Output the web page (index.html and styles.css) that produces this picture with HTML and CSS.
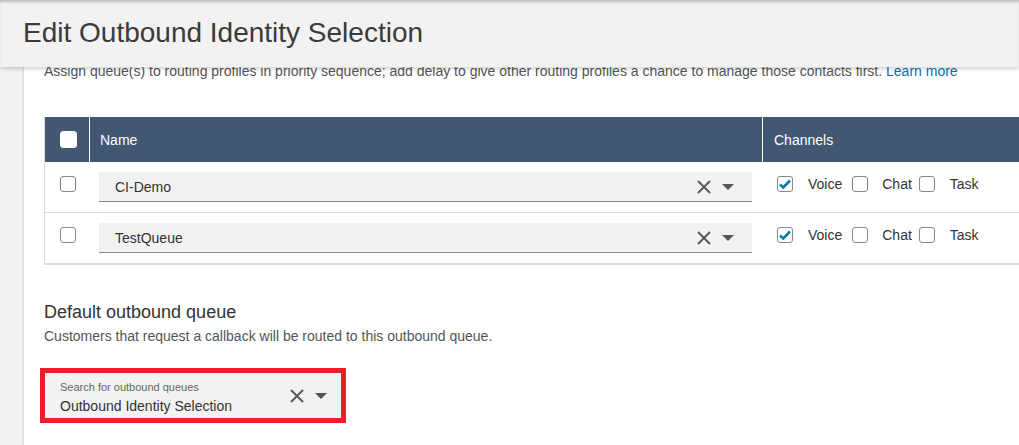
FILE: index.html
```html
<!DOCTYPE html>
<html>
<head>
<meta charset="utf-8">
<link rel="stylesheet" href="styles.css">
</head>
<body>
<header class="topbar"><h1 class="title">Edit Outbound Identity Selection</h1></header>
<main class="panel">
  <p class="desc">Assign queue(s) to routing profiles in priority sequence; add delay to give other routing profiles a chance to manage those contacts first. <a class="link">Learn more</a></p>
  <div class="table">
    <div class="row head">
      <div class="cell c-check"><span class="cb cb-white"></span></div>
      <div class="cell c-name">Name</div>
      <div class="cell c-chan">Channels</div>
    </div>
    <div class="row">
      <div class="cell c-check"><span class="cb"></span></div>
      <div class="cell c-name">
        <div class="select"><span class="sel-text">CI-Demo</span>
          <svg class="ico-x" width="14" height="14" viewBox="0 0 14 14"><path d="M1 1L13 13M13 1L1 13" stroke="#555" stroke-width="1.8"/></svg>
          <svg class="ico-caret" width="12" height="6" viewBox="0 0 12 6"><path d="M0 0H12L6 6Z" fill="#555"/></svg>
        </div>
      </div>
      <div class="cell c-chan">
        <span class="cb checked"><svg width="12" height="10" viewBox="0 0 12 10"><path d="M1 5.5L4.3 8.5L11 1.5" stroke="#0a7da8" stroke-width="2.6" fill="none"/></svg></span><span class="lbl l-voice">Voice</span>
        <span class="cb"></span><span class="lbl l-chat">Chat</span>
        <span class="cb"></span><span class="lbl l-task">Task</span>
      </div>
    </div>
    <div class="row">
      <div class="cell c-check"><span class="cb"></span></div>
      <div class="cell c-name">
        <div class="select"><span class="sel-text">TestQueue</span>
          <svg class="ico-x" width="14" height="14" viewBox="0 0 14 14"><path d="M1 1L13 13M13 1L1 13" stroke="#555" stroke-width="1.8"/></svg>
          <svg class="ico-caret" width="12" height="6" viewBox="0 0 12 6"><path d="M0 0H12L6 6Z" fill="#555"/></svg>
        </div>
      </div>
      <div class="cell c-chan">
        <span class="cb checked"><svg width="12" height="10" viewBox="0 0 12 10"><path d="M1 5.5L4.3 8.5L11 1.5" stroke="#0a7da8" stroke-width="2.6" fill="none"/></svg></span><span class="lbl l-voice">Voice</span>
        <span class="cb"></span><span class="lbl l-chat">Chat</span>
        <span class="cb"></span><span class="lbl l-task">Task</span>
      </div>
    </div>
  </div>
  <h2 class="sub">Default outbound queue</h2>
  <p class="subdesc">Customers that request a callback will be routed to this outbound queue.</p>
  <div class="highlight">
    <div class="search">
      <div class="search-text">
        <span class="search-label">Search for outbound queues</span>
        <span class="search-value">Outbound Identity Selection</span>
      </div>
      <svg class="ico-x" width="14" height="14" viewBox="0 0 14 14"><path d="M1 1L13 13M13 1L1 13" stroke="#555" stroke-width="1.8"/></svg>
      <svg class="ico-caret" width="12" height="6" viewBox="0 0 12 6"><path d="M0 0H12L6 6Z" fill="#555"/></svg>
    </div>
  </div>
</main>
</body>
</html>
```

FILE: styles.css
```css
html, body { margin: 0; padding: 0; }
body {
  background: #f2f2f2;
  font-family: "Liberation Sans", Arial, sans-serif;
  color: #333;
  width: 1019px;
  height: 445px;
  overflow: hidden;
  position: relative;
}
.topbar {
  position: absolute;
  left: 0; top: 0;
  width: 100%;
  height: 67px;
  background: #f2f2f2;
  box-shadow: 0 2px 4px rgba(0,0,0,0.18), inset 0 3px 3px -1px rgba(0,0,0,0.22);
  z-index: 2;
  display: flex;
  align-items: center;
}
.title {
  margin: 0 0 0 23px;
  font-size: 28px;
  font-weight: normal;
  color: #3b3b3b;
  line-height: 32px;
  padding-bottom: 2px;
}
.panel {
  margin-left: 24px;
  background: #fff;
  height: 445px;
  padding: 62px 0 0 20px;
  box-sizing: border-box;
  box-shadow: -1px 0 2px rgba(0,0,0,0.12);
  overflow: hidden;
}
.desc {
  margin: 0;
  font-size: 14px;
  line-height: 18px;
  color: #555;
  white-space: nowrap;
}
.link { color: #0d6fbd; }
.table {
  margin-top: 37px;
  width: 1060px;
  border: 1px solid #ddd;
  border-top: 0;
}
.row {
  display: grid;
  grid-template-columns: 44px 673px 1fr;
  height: 50px;
  border-bottom: 1px solid #ddd;
  align-items: stretch;
}
.row.head {
  height: 45px;
  background: #415772;
  border-bottom: 0;
  color: #fff;
  font-size: 14px;
}
.cell { display: flex; align-items: center; }
.head .c-name, .head .c-chan { padding-left: 10px; border-left: 1px solid #fff; }
.head .c-chan { padding-left: 11px; }
.c-check { padding-left: 15px; }
.row:not(.head) .c-check { align-items: flex-start; padding-top: 14px; }
.cb {
  display: inline-flex;
  align-items: center;
  justify-content: center;
  width: 14px; height: 14px;
  border: 1px solid #888;
  border-radius: 3px;
  background: #fff;
  flex: none;
}
.cb-white { border-color: #fff; width: 15px; height: 15px; }
.c-name { padding: 0 10px 0 10px; }
.row:not(.head) .c-name { align-items: flex-start; padding-top: 10px; }
.select {
  flex: 1;
  height: 29px;
  background: #f2f2f2;
  border-bottom: 1px solid #888;
  display: flex;
  align-items: center;
  padding: 0 18px 0 16px;
  font-size: 14px;
  color: #333;
}
.sel-text { flex: 1; }
.ico-x { margin-right: 11px; }
.ico-caret { margin-top: 1px; }
.row:not(.head) .c-chan { padding-left: 15px; align-items: flex-start; padding-top: 14px; font-size: 14px; color: #333; }
.lbl { line-height: 16px; }
.l-voice { margin: 0 10px 0 15px; }
.l-chat { margin: 0 7px 0 14px; }
.l-task { margin-left: 15px; }
.sub {
  margin: 36px 0 0 0;
  font-size: 18px;
  font-weight: normal;
  color: #333;
  line-height: 22px;
}
.subdesc {
  margin: 4px 0 0 0;
  font-size: 14px;
  color: #555;
  line-height: 18px;
}
.highlight {
  margin: 23px 0 0 -4px;
  width: 296px;
  border: 5px solid #e8202a;
}
.search {
  height: 45px;
  background: #f2f2f2;
  display: flex;
  align-items: center;
  padding: 0 14px 0 15px;
}
.search-text { flex: 1; display: flex; flex-direction: column; }
.search-label { font-size: 11px; color: #666; line-height: 13px; margin-top: 4px; }
.search-value { font-size: 14px; color: #333; line-height: 18px; margin-top: 3px; }
```
